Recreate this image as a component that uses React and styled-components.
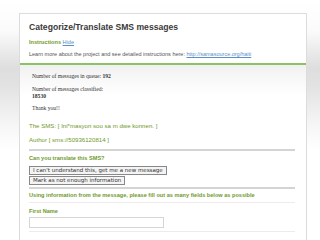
import React from 'react'
import styled, { createGlobalStyle } from 'styled-components'

const Global = createGlobalStyle`
  html, body {
    margin: 0;
    padding: 0;
    width: 320px;
    height: 240px;
    overflow: hidden;
  }
  body {
    background: linear-gradient(to bottom, #fff 0px, #fbfbfb 30px, #dedede 68px, #e2e2e2 85px, #f6f6f6 125px, #fff 150px);
    font-family: "Liberation Sans", Arial, sans-serif;
  }
`

const Panel = styled.div`
  margin: 13px 0 0 19px;
  width: 286px;
  height: 227px;
  overflow: hidden;
  border: 1px solid #dcdcdc;
  border-bottom: none;
  background: #fff;
`

const Head = styled.div`
  padding: 8px 9px 6px;
  border-bottom: 2px solid #8cc266;
`

const Title = styled.h1`
  margin: 0 0 7px;
  font-size: 8.6px;
  font-weight: bold;
  color: #3a3a3a;
`

const Label = styled.div`
  font-size: 5.6px;
  font-weight: bold;
  color: #6f9a2c;
  margin: ${p => p.$m || '0'};
`

const Link = styled.a`
  color: #5b8fc9;
  text-decoration: underline;
  font-weight: normal;
`

const Small = styled.div`
  font-size: 5.5px;
  color: #555;
  margin-top: 6px;
`

const Body = styled.div`
  padding: 8px 11px 0 9px;
  background: linear-gradient(to bottom, #f1f1f1 0px, #fff 30px);
`

const Stats = styled.div`
  font-family: "Liberation Serif", "Times New Roman", serif;
  font-size: 5.6px;
  color: #333;
  padding-left: 3px;
  line-height: 7px;
`

const Para = styled.p`
  margin: 0 0 ${p => p.$mb || 5}px;
`

const SmsLine = styled.div`
  font-size: 6.1px;
  color: #6f9a2c;
  margin: ${p => p.$m || '0'};
`

const Rule = styled.hr`
  border: none;
  height: ${p => p.$h || 1}px;
  background: ${p => p.$c || '#cfcfcf'};
  margin: ${p => p.$m || '0'};
`

const Buttons = styled.div`
  display: flex;
  flex-direction: column;
  align-items: flex-start;
  gap: 1px;
  margin-top: 5px;
`

const Btn = styled.button`
  font-family: "DejaVu Sans", "Liberation Sans", sans-serif;
  font-size: 5.5px;
  color: #333;
  background: #f4f4f4;
  border: 1px solid #888;
  padding: 0 3px;
  height: 9px;
  line-height: 7px;
  border-radius: 0;
`

const Input = styled.div`
  width: 133px;
  height: 9px;
  border: 1px solid #d6d6d6;
  margin-top: 3px;
`

const App = () => (
  <>
    <Global />
    <Panel>
      <Head>
        <Title>Categorize/Translate SMS messages</Title>
        <Label>Instructions <Link href="#">Hide</Link></Label>
        <Small>
          Learn more about the project and see detailed instructions here: <Link href="#">http://samasource.org/haiti</Link>
        </Small>
      </Head>
      <Body>
        <Stats>
          <Para $mb={6}>Number of messages in queue: <b>192</b></Para>
          <Para>Number of messages classified:<br /><b>18530</b></Para>
          <Para $mb={10}>Thank you!!</Para>
        </Stats>
        <SmsLine>The SMS: [ Ini*masyon sou sa m dwe konnen. ]</SmsLine>
        <SmsLine $m="7px 0 0">Author [ sms://50936120814 ]</SmsLine>
        <Rule $h={2} $c="#d4d4d4" $m="6px 0 0" />
        <Label $m="4px 0 0">Can you translate this SMS?</Label>
        <Buttons>
          <Btn>I can't understand this, get me a new message</Btn>
          <Btn>Mark as not enough information</Btn>
        </Buttons>
        <Rule $h={2} $c="#d4d4d4" $m="2px 0 0" />
        <Label $m="3px 0 0">Using information from the message, please fill out as many fields below as possible</Label>
        <Rule $h={1} $c="#ececec" $m="4px 0 0" />
        <Label $m="5px 0 0">First Name</Label>
        <Input />
        <Rule $h={1} $c="#ececec" $m="3px 0 0" />
      </Body>
    </Panel>
  </>
)

export default App
